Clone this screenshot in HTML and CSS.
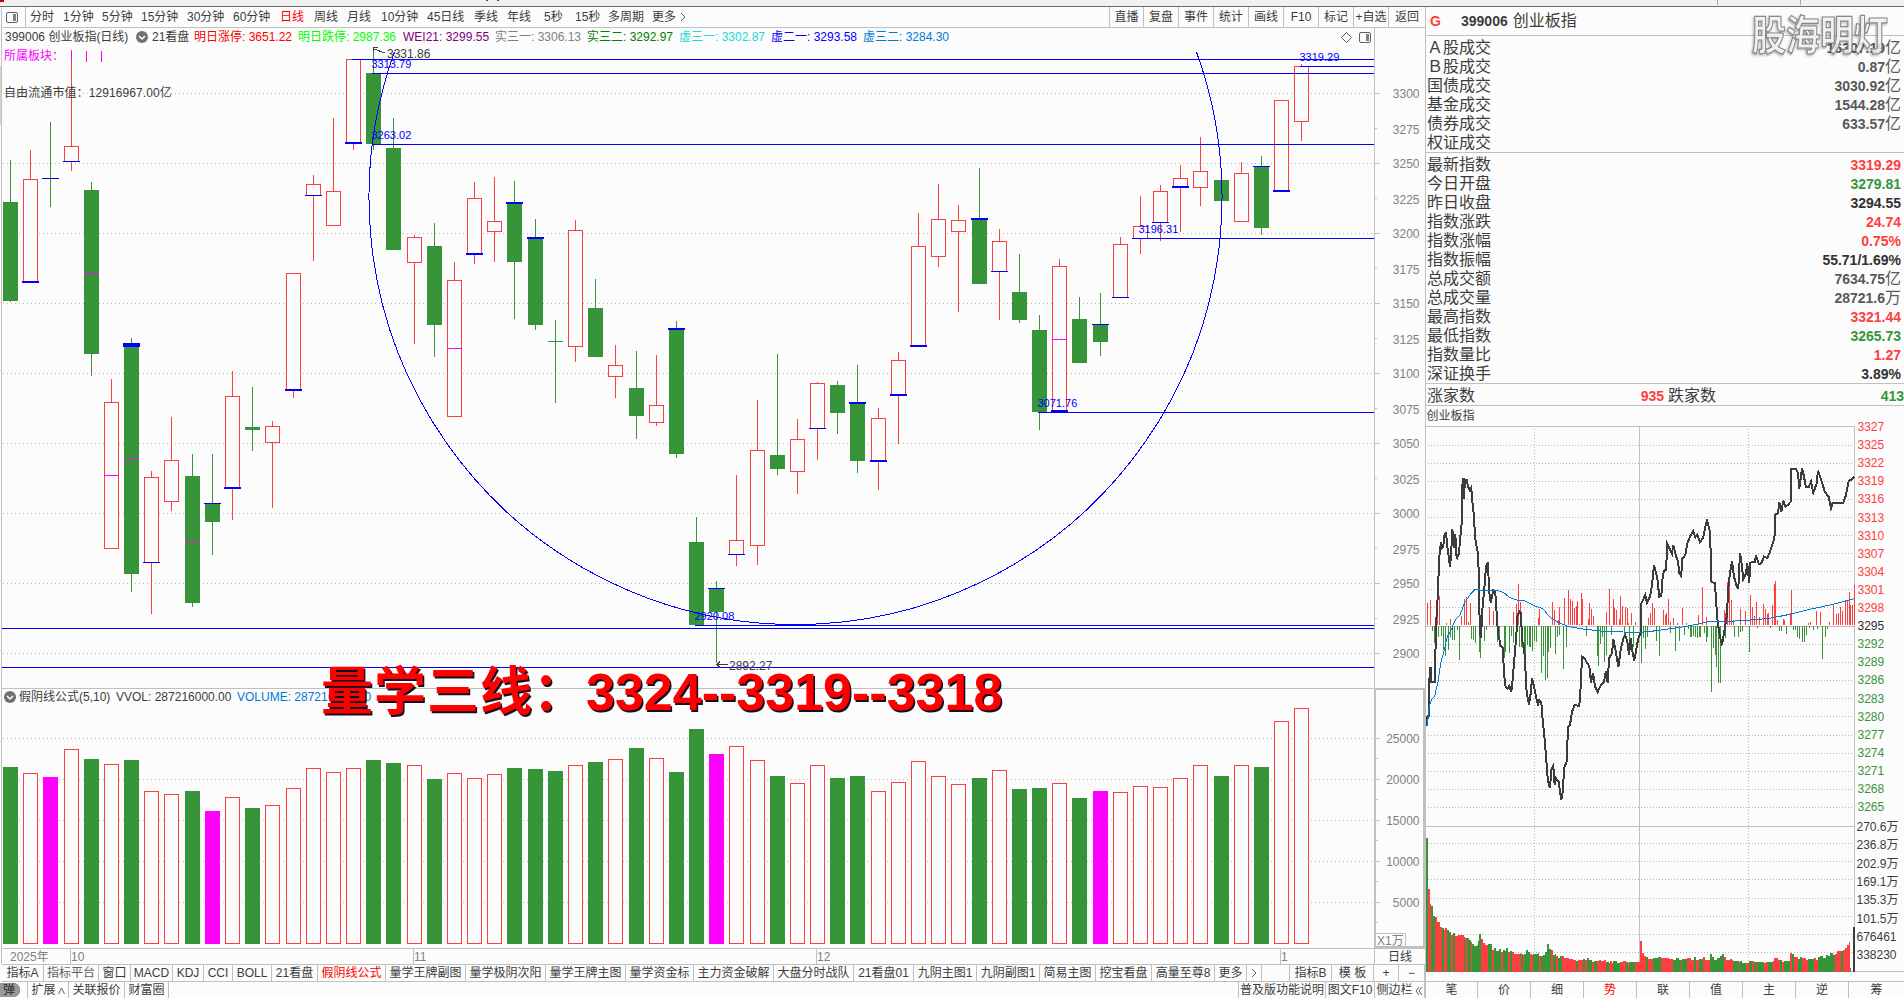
FILE: index.html
```
<!DOCTYPE html>
<html lang="zh-CN">
<head>
    <meta charset="UTF-8">
    <meta name="viewport" content="width=device-width, initial-scale=1.0">
    <title>创业板指 399006</title>
    <link rel="stylesheet" href="styles.css">
</head>
<body>
    <div class="top-strip"></div>
    <div class="main">
        <div class="left">
            <div class="toolbar">
                <div class="periods">
                    <span class="panel-toggle"><svg width="12" height="11"><rect x="0.5" y="0.5" width="11" height="10" rx="1.5"/><rect class="fill" x="7" y="2" width="3" height="7"/></svg></span>
                    <span>分时</span><span>1分钟</span><span>5分钟</span><span>15分钟</span><span>30分钟</span><span>60分钟</span>
                    <span class="active">日线</span><span>周线</span><span>月线</span><span>10分钟</span><span>45日线</span>
                    <span>季线</span><span>年线</span><span>5秒</span><span>15秒</span><span>多周期</span><span>更多<svg width="6" height="10"><path d="M1 1L5 5L1 9"/></svg></span>
                </div>
                <div class="actions">
                    <span>直播</span><span>复盘</span><span>事件</span><span>统计</span><span>画线</span><span>F10</span><span>标记</span><span>+自选</span><span>返回</span>
                </div>
            </div>
            <div class="chart">
                <svg id="kline" width="1423" height="920" viewBox="2 28 1423 920"></svg>
                <div class="legend legend-main">
                    <span>399006 创业板指(日线)</span>
                    <svg class="dot" width="12" height="12"><circle cx="6" cy="6" r="6"/><path d="M3 5L6 8L9 5"/></svg>
                    <span>21看盘</span>
                    <span class="c-red">明日涨停: 3651.22</span>
                    <span class="c-lime">明日跌停: 2987.36</span>
                    <span class="c-purple">WEI21: 3299.55</span>
                    <span class="c-gray">实三一: 3306.13</span>
                    <span class="c-green">实三二: 3292.97</span>
                    <span class="c-cyan">虚三一: 3302.87</span>
                    <span class="c-blue">虚二一: 3293.58</span>
                    <span class="c-sky">虚三二: 3284.30</span>
                </div>
                <div class="legend-tools">
                    <svg width="11" height="11"><path d="M5.5 0.5L10.5 5.5L5.5 10.5L0.5 5.5Z"/></svg>
                    <svg width="12" height="11"><rect x="0.5" y="0.5" width="11" height="10" rx="1.5"/><rect class="fill" x="7" y="2" width="3" height="7"/></svg>
                </div>
                <div class="sector">所属板块：<i></i><i></i><i></i></div>
                <div class="market-cap">自由流通市值：12916967.00亿</div>
                <div class="legend legend-vol">
                    <svg class="dot" width="12" height="12"><circle cx="6" cy="6" r="6"/><path d="M3 5L6 8L9 5"/></svg>
                    <span>假阴线公式(5,10)</span>
                    <span>VVOL: 287216000.00</span>
                    <span class="c-sky">VOLUME: 287216000.00</span>
                </div>
                <div class="headline"><span>量学三线：</span>3324--3319--3318</div>
            </div>
            <div class="dates">
                <span class="year">2025年</span><span>10</span><span>11</span><span>12</span><span>1</span><span class="cycle">日线</span>
            </div>
            <div class="indicators">
                <span>指标A</span><span class="dim">指标平台</span><span>窗口</span><span>MACD</span><span>KDJ</span><span>CCI</span><span>BOLL</span><span>21看盘</span><span class="active">假阴线公式</span><span>量学王牌副图</span><span>量学极阴次阳</span><span>量学王牌主图</span><span>量学资金标</span><span>主力资金破解</span><span>大盘分时战队</span><span>21看盘01</span><span>九阴主图1</span><span>九阴副图1</span><span>简易主图</span><span>挖宝看盘</span><span>高量至尊8</span><span>更多</span><span><svg width="6" height="10"><path d="M1 1L5 5L1 9"/></svg></span><span></span><span>指标B</span><span>模 板</span><span>+</span><span>−</span>
            </div>
            <div class="footer">
                <span class="pill">弹</span><span>扩展<svg width="7" height="8"><path d="M0.5 7L3.5 1L6.5 7"/></svg></span><span>关联报价</span><span>财富圈</span><span></span><span>普及版功能说明</span><span>图文F10</span><span>侧边栏<svg width="8" height="10"><path d="M4 1L1 5L4 9M7 1L4 5L7 9"/></svg></span>
            </div>
        </div>
        <div class="right">
            <div class="stock"><b class="flag">G</b><b>399006</b><span>创业板指</span></div>
            <ul class="quotes turnover">
                <li><span>Ａ股成交</span><b>16307.19<i>亿</i></b></li>
                <li><span>Ｂ股成交</span><b>0.87<i>亿</i></b></li>
                <li><span>国债成交</span><b>3030.92<i>亿</i></b></li>
                <li><span>基金成交</span><b>1544.28<i>亿</i></b></li>
                <li><span>债券成交</span><b>633.57<i>亿</i></b></li>
                <li><span>权证成交</span></li>
            </ul>
            <ul class="quotes index">
                <li><span>最新指数</span><b class="up">3319.29</b></li>
                <li><span>今日开盘</span><b class="down">3279.81</b></li>
                <li><span>昨日收盘</span><b class="flat">3294.55</b></li>
                <li><span>指数涨跌</span><b class="up">24.74</b></li>
                <li><span>指数涨幅</span><b class="up">0.75%</b></li>
                <li><span>指数振幅</span><b class="flat">55.71/1.69%</b></li>
                <li><span>总成交额</span><b>7634.75<i>亿</i></b></li>
                <li><span>总成交量</span><b>28721.6<i>万</i></b></li>
                <li><span>最高指数</span><b class="up">3321.44</b></li>
                <li><span>最低指数</span><b class="down">3265.73</b></li>
                <li><span>指数量比</span><b class="up">1.27</b></li>
                <li><span>深证换手</span><b class="flat">3.89%</b></li>
            </ul>
            <div class="breadth"><span>涨家数</span><b class="up">935</b><span>跌家数</span><b class="down">413</b></div>
            <svg id="intraday" width="478" height="575" viewBox="1426 406 478 575"></svg>
            <div class="side-tabs">
                <span>笔</span><span>价</span><span>细</span><span class="active">势</span><span>联</span><span>值</span><span>主</span><span>逆</span><span>筹</span>
            </div>
            <div class="watermark">股海明灯</div>
        </div>
    </div>
    <script src="chart.js"></script>
</body>
</html>
```

FILE: styles.css
```
:root{
    --bg: #fcfcfc;
    --line: #c0c0c0;
    --text: #3c3c3c;
    --up: #fc4040;
    --down: #389438;
}

*{
    box-sizing: border-box;
    margin: 0;
    padding: 0;
}

body{
    width: 1904px;
    height: 998px;
    overflow: hidden;
    background-color: var(--bg);
    color: var(--text);
    font-family: 'Liberation Sans', 'Noto Sans CJK SC', sans-serif;
    font-size: 12px;
    line-height: 16px;
    white-space: nowrap;
}

svg{
    display: block;
    fill: none;
}

.top-strip{
    height: 7px;
    border-bottom: 1px solid #6c6c6c;
    background:
        linear-gradient(#a8a8a8, #a8a8a8) 1717px 0 / 1px 5px no-repeat,
        linear-gradient(#a8a8a8, #a8a8a8) 1800px 0 / 1px 5px no-repeat,
        linear-gradient(#c00000, #c00000) 0 0 / 4px 2px no-repeat,
        linear-gradient(#603090, #603090) 486px 0 / 2px 1px no-repeat,
        linear-gradient(#603090, #603090) 497px 0 / 2px 1px no-repeat,
        #f0f0f0;
}

.main{
    display: flex;
    height: 991px;
    background: linear-gradient(#d4d4d4, #d4d4d4) 0 59px / 1px 59px no-repeat;
}

.left{
    width: 1425px;
    display: flex;
    flex-direction: column;
}

/* toolbar */
.toolbar{
    height: 21px;
    display: flex;
    justify-content: space-between;
    border-bottom: 1px solid var(--line);
    border-left: 1px solid var(--line);
    margin-left: 1px;
    line-height: 20px;
}

.toolbar svg, .legend-tools svg, .indicators svg, .footer svg{
    stroke: #606060;
}

.toolbar svg .fill, .legend-tools svg .fill{
    fill: #808080;
    stroke: none;
}

.periods{
    display: grid;
    grid-template-columns: 28px 33px 39px 39px 46px 46px 47px 34px 33px 34px 46px 47px 33px 37px 31px 33px 44px 60px;
}

.periods span{
    display: flex;
    align-items: center;
}

.periods span svg{
    margin-left: 4px;
}

.periods .panel-toggle{
    width: 24px;
    border-right: 1px solid var(--line);
}

.active{
    color: #fc0000;
}

.actions{
    display: grid;
    grid-template-columns: 34px repeat(7, 35px) 37px;
    text-align: center;
}

.actions span{
    border-left: 1px solid var(--line);
}

/* charts */
.chart{
    position: relative;
    height: 920px;
    padding-left: 1px;
    margin-left: 1px;
    border-left: 1px solid var(--line);
}

.chart svg#kline{
    margin-left: -1px;
}

.legend{
    position: absolute;
    display: grid;
    align-items: center;
}

.legend-main{
    left: 3px;
    top: 1px;
    grid-template-columns: 131px 16px 42px 104px 105px 92px 92px 92px 92px 92px 92px;
}

.legend-vol{
    left: 2px;
    top: 661px;
    grid-template-columns: 15px 97px 121px 140px;
}

.dot circle{
    fill: #707070;
}

.dot path{
    stroke: #fff;
    stroke-width: 1.5;
}

.legend-tools{
    position: absolute;
    left: 1339px;
    top: 4px;
    display: flex;
    gap: 7px;
}

.sector{
    position: absolute;
    left: 2px;
    top: 20px;
    display: flex;
    align-items: center;
    color: #fc00fc;
}

.sector i{
    width: 1px;
    height: 11px;
    margin-right: 14px;
    background-color: #fc00fc;
}

.sector i:first-of-type{
    margin-left: 7px;
}

.market-cap{
    position: absolute;
    left: 2px;
    top: 57px;
    letter-spacing: 0.1px;
}

.headline{
    position: absolute;
    left: 319px;
    top: 634px;
    font-size: 52px;
    font-weight: 700;
    line-height: 60px;
    color: #ff0000;
    text-shadow: 1.5px 1.5px 0 #101020;
}

.headline span{
    letter-spacing: 1px;
}

.c-red{ color: #fc0000; }
.c-lime{ color: #00fc00; }
.c-purple{ color: #800080; }
.c-gray{ color: #808080; }
.c-green{ color: #008000; }
.c-cyan{ color: #20d8d8; }
.c-blue{ color: #0000fc; }
.c-sky{ color: #0078d4; }

#kline text, #intraday text{
    font-size: 12px;
}

#kline .axis-label{
    fill: #808080;
    text-anchor: end;
}

#kline .mark-label{
    fill: #0000fc;
    font-size: 11px;
}

#kline .note{
    fill: #3c3c3c;
}

/* date axis and bottom bars */
.dates{
    height: 16px;
    margin-left: 1px;
    display: grid;
    grid-template-columns: 68px 343px 403px 464px 94px 51px;
    border-top: 1px solid var(--line);
    border-left: 1px solid var(--line);
    color: #808080;
}

.dates span + span{
    border-left: 1px solid var(--line);
}

.dates .year{
    padding-left: 8px;
}

.dates .cycle{
    color: var(--text);
    text-align: center;
}

.indicators{
    height: 18px;
    margin-left: 2px;
    display: grid;
    grid-template-columns: 42px 55px 32px 42px 31px 29px 39px 46px 68px 80px 80px 80px 68px 80px 80px 60px 63px 63px 56px 56px 63px 32px 15px 28px 42px 42px 25px 26px;
    border-top: 1px solid var(--line);
    border-bottom: 1px solid var(--line);
    text-align: center;
}

.indicators span{
    display: flex;
    align-items: center;
    justify-content: center;
    border-right: 1px solid var(--line);
}

.dim{
    color: #606060;
}

.footer{
    height: 16px;
    display: grid;
    grid-template-columns: 28px 41px 56px 44px 1070px 87px 49px 50px;
}

.footer span{
    display: flex;
    align-items: center;
    justify-content: center;
    border-right: 1px solid var(--line);
    line-height: 17px;
}

.footer span svg{
    margin-left: 2px;
}

.footer .pill{
    justify-content: flex-start;
    padding-left: 3px;
    background: linear-gradient(#989898, #989898) 0 1px / 13px 14px no-repeat, radial-gradient(circle at 13px 8px, #989898 7px, transparent 7.5px);
    font-weight: 500;
}

/* right panel */
.right{
    position: relative;
    width: 479px;
    display: flex;
    flex-direction: column;
    border-left: 1px solid var(--line);
}

.stock{
    height: 29px;
    display: flex;
    align-items: center;
    padding-bottom: 1px;
    border-bottom: 1px solid var(--line);
    font-size: 14px;
}

.stock .flag{
    width: 31px;
    margin-left: 4px;
    color: var(--up);
}

.stock span{
    margin-left: 5px;
    font-size: 16px;
}

.quotes{
    list-style: none;
    border-bottom: 1px solid var(--line);
}

.turnover{
    height: 117px;
    padding-top: 2px;
}

.index{
    height: 231px;
    padding-top: 2px;
}

.quotes li{
    display: flex;
    justify-content: space-between;
    align-items: center;
    height: 19px;
    padding: 0 3px 0 1px;
    font-size: 16px;
}

.quotes b, .breadth b{
    font-size: 14px;
    color: #585858;
}

.quotes b i{
    font-size: 16px;
    font-style: normal;
    font-weight: 400;
}

.quotes b.flat{
    color: #303030;
}

.quotes b.up, .breadth b.up{
    color: var(--up);
}

.quotes b.down, .breadth b.down{
    color: var(--down);
}

.breadth{
    height: 22px;
    display: grid;
    grid-template-columns: 160px 77px 160px 80px;
    align-items: center;
    padding: 2px 0 0 1px;
    border-bottom: 1px solid var(--line);
    font-size: 16px;
}

.breadth b{
    text-align: right;
}

.breadth span + b + span{
    padding-left: 4px;
}

#intraday{
    flex-shrink: 0;
}

.side-tabs{
    height: 17px;
    display: grid;
    grid-template-columns: 51px repeat(7, 53px) 56px;
    border-top: 1px solid var(--line);
    text-align: center;
    line-height: 17px;
}

.side-tabs span{
    height: 16px;
}

.side-tabs span + span{
    border-left: 1px solid var(--line);
}

.watermark{
    position: absolute;
    left: 326px;
    top: 5px;
    font-size: 34px;
    font-weight: 700;
    line-height: 46px;
    color: rgba(255, 255, 255, 0.8);
    -webkit-text-stroke: 1px #888;
    transform: scaleY(1.22);
    filter: drop-shadow(-1px 1px 1px rgba(0, 0, 0, 0.35));
}
```

FILE: chart.js
```
const BG = '#fcfcfc', UP = '#fc4040', DOWN = '#389438', BLUE = '#0000fc', PINK = '#fc00fc', GRID = '#c0c0c0';

// [high, body top, body bottom, low, colour, blue mark y, blue mark height, pink mark y]
const candles = [
    [160,202,301,302,'g'], [150,179,283,283,'r',281,2], [122,178,178,207,'g',178,1], [50,146,162,171,'r',161,1],
    [182,190,354,376,'g',0,0,272], [379,402,549,549,'r',0,0,475], [338,344,574,592,'g',343,4,459], [471,477,563,614,'r',562,1],
    [417,460,502,511,'r'], [454,476,603,607,'g',0,0,540], [454,503,522,555,'g',503,1], [371,396,489,520,'r',487,2],
    [387,427,430,451,'g'], [421,426,443,508,'r'], [273,273,391,398,'r',389,2], [175,184,196,261,'r',195,1],
    [118,191,226,226,'r'], [59,59,144,150,'r',142,2], [48,73,144,150,'g'], [118,148,250,250,'g'],
    [235,237,263,344,'r'], [223,246,325,357,'g'], [262,280,417,417,'r',0,0,348], [182,198,255,264,'r',253,2],
    [177,221,232,262,'r'], [181,202,262,319,'g',202,2], [219,237,325,330,'g',237,2], [320,341,342,403,'g'],
    [220,230,347,362,'r'], [279,308,357,357,'g'], [345,365,377,398,'r'], [351,388,416,439,'g'],
    [355,405,423,426,'r'], [321,328,454,458,'g',328,2], [517,542,625,625,'g'], [581,588,612,663,'g',588,1],
    [475,540,555,566,'r',554,1], [400,450,546,565,'r'], [354,455,469,475,'g'], [419,439,472,494,'r'],
    [382,383,429,460,'r',428,1], [381,385,413,434,'g'], [365,402,461,473,'g',402,2], [408,418,461,490,'r',460,2],
    [352,360,395,444,'r',394,2], [213,246,346,346,'r',345,2], [184,219,257,267,'r'], [205,220,232,312,'r'],
    [168,218,284,284,'g',218,2], [229,241,272,320,'r',271,1], [254,292,320,323,'g'], [315,330,412,430,'g'],
    [259,266,412,412,'r',410,2,339], [297,319,363,363,'g'], [293,324,342,356,'g',324,1], [237,244,298,298,'r',297,1],
    [196,226,239,254,'r'], [185,191,223,241,'r',222,1], [165,178,188,232,'r',186,2], [137,171,188,206,'r'],
    [180,180,201,217,'g'], [162,173,222,222,'r'], [156,166,228,235,'g',166,1], [100,100,192,192,'r',190,2],
    [64,66,122,141,'r']
];

const volumes = '767g 773r 777m 749r 759g 764r 760g 791r 794r 791g 811m 797r 808g 805r 788r 768r 772r 768r 760g 763g 765r 779g 773r 778r 774r 768g 769g 771g 765r 762g 759r 748g 758r 772g 729g 754m 746r 760r 776g 783r 765r 778g 776g 791r 782r 761r 776r 784r 778g 770r 789g 788g 783r 798g 791m 792r 786r 787r 778r 765r 776g 765r 767g 721r 708r'.split(' ');

const rect = (x, y, w, h, c) => `<rect x="${x}" y="${y}" width="${w}" height="${h}" fill="${c}"/>`;
const box = (x, y, w, h, c) => `<rect x="${x + 0.5}" y="${y + 0.5}" width="${w - 1}" height="${h - 1}" fill="${BG}" stroke="${c}"/>`;
const dots = (x1, x2, y, step) => `<path d="M${x1} ${y + 0.5}H${x2}" stroke="#b8b8b8" stroke-dasharray="1 ${step - 1}"/>`;
const label = (x, y, s, cls, c) => `<text x="${x}" y="${y}" class="${cls || ''}" ${c ? `fill="${c}"` : ''}>${s}</text>`;
const cx = i => Math.floor(10.55 + i * 20.1765);

function drawKline() {
    let s = '';

    // price grid and axis
    for (let p = 3300, y = 93; p >= 2900; p -= 50, y += 70) {
        s += dots(3, 1374, y, 4) + rect(1375, y, 5, 1, GRID) + label(1419.5, y + 5, p, 'axis-label');
        if (p > 2900) s += rect(1375, y + 35, 2, 1, GRID) + label(1419.5, y + 41, p - 25, 'axis-label');
    }
    for (let v = 25000, y = 738; v > 0; v -= 5000, y += 41) {
        s += dots(3, 1374, y, 4) + rect(1376, y, 4, 1, GRID) + label(1419.5, y + 5, v, 'axis-label');
        s += rect(1376, y + 20, 2, 1, GRID);
    }
    s += rect(1374, 28, 1, 920, GRID) + rect(2, 688, 1423, 1, GRID);
    s += `<rect x="1375" y="689" width="49" height="258" stroke="${GRID}" stroke-width="2"/>`;
    s += `<rect x="1375.5" y="933.5" width="30" height="14" stroke="${GRID}"/>` + label(1377, 945, 'X1万', '', '#808080');

    // candles
    candles.forEach(([hi, top, bot, lo, c, by, bh, py], i) => {
        const x = cx(i), col = c === 'g' ? DOWN : UP;
        s += rect(x, hi, 1, lo - hi, col);
        if (bot > top) s += c === 'g' ? rect(x - 7, top, 15, bot - top, col) : box(x - 7, top, 15, bot - top, col);
        if (py) s += rect(x - 7, py, 15, 1, PINK);
        if (bh) s += rect(x - 8, by, 17, bh, BLUE);
    });

    // volume bars
    volumes.forEach((v, i) => {
        const y = parseInt(v), c = v[3], x = cx(i) - 7;
        s += c === 'r' ? box(x, y, 15, 944 - y, UP) : rect(x, y, 15, 944 - y, c === 'g' ? DOWN : '#ff00ff');
    });

    // drawn levels and arc
    [[352, 59], [372, 73], [372, 144], [1132, 238], [1300, 66], [1038, 412], [695, 625], [2, 628], [2, 667]].forEach(([x, y]) => {
        s += rect(x, y, 1374 - x, 1, BLUE);
    });
    s += `<path d="M394.5 52A426.5 427.1 0 1 0 1196.5 52" stroke="${BLUE}"/>`;
    s += label(371.5, 68, '3313.79', 'mark-label') + label(371.5, 139, '3263.02', 'mark-label');
    s += label(1299.5, 61, '3319.29', 'mark-label') + label(1138.5, 233, '3196.31', 'mark-label');
    s += label(1037.5, 407, '3071.76', 'mark-label') + label(694.5, 620, '2920.08', 'mark-label');

    s += '<path d="M385 53L374 49M378 47H373.5V52" stroke="#3c3c3c"/>' + label(387, 58, '3331.86', 'note');
    s += '<path d="M728 664.5H717M720 661.5L717 664.5L720 667.5" stroke="#3c3c3c"/>' + label(729, 670, '2892.27', 'note');

    document.getElementById('kline').innerHTML = `<g shape-rendering="crispEdges">${s}</g>`;
}

// intraday series are in thirds of a pixel, origin at 1410,400
const price = '50,978 50,950 57,948 57,870 60,803 64,803 64,847 74,847 74,800 77,735 80,632 84,580 87,480 90,450 93,427 96,445 100,440 103,408 108,396 112,440 116,470 120,500 124,460 126,387 130,400 132,443 136,402 140,478 147,460 150,420 155,370 156,300 158,234 163,296 164,238 170,240 174,260 180,272 184,264 188,315 192,350 195,410 200,440 204,460 207,540 209,680 212,715 214,700 216,640 220,600 224,550 228,500 234,486 237,570 242,608 246,590 250,570 256,578 260,640 264,700 272,738 278,742 281,800 285,855 292,866 298,858 304,875 307,850 312,790 316,745 320,690 322,650 328,634 333,640 336,720 342,740 346,800 350,880 357,914 362,880 366,834 372,860 378,890 384,916 388,900 394,905 398,960 404,1020 409,1080 414,1145 420,1164 424,1110 430,1098 434,1155 438,1135 446,1145 450,1175 454,1200 459,1170 462,1105 470,1085 474,980 480,975 486,935 494,915 508,918 512,860 516,770 524,775 530,788 538,798 543,848 549,818 555,860 563,876 570,860 582,845 588,812 593,850 597,775 606,760 610,717 616,745 625,802 632,750 640,715 646,706 652,725 657,765 662,715 668,760 673,782 680,740 686,710 692,700 692,615 700,598 706,585 711,608 720,590 726,555 732,495 738,520 742,535 748,590 754,588 758,530 762,512 768,510 772,432 780,448 786,462 790,435 797,465 804,485 808,520 814,528 816,478 826,465 832,430 840,410 849,393 856,412 862,405 870,426 880,412 886,380 891,362 896,380 900,395 902,460 904,545 915,550 918,600 922,655 928,700 936,736 942,700 950,650 956,550 960,520 966,483 972,530 980,560 985,564 990,458 996,500 1000,538 1008,520 1012,490 1018,550 1020,488 1034,486 1038,465 1046,492 1054,490 1062,470 1072,474 1080,455 1090,425 1094,405 1094,345 1104,340 1108,305 1114,336 1120,302 1126,320 1134,315 1142,305 1143,206 1158,207 1164,220 1168,266 1172,235 1176,204 1182,230 1188,262 1196,262 1203,245 1210,278 1220,250 1224,212 1234,240 1244,275 1256,290 1263,324 1268,308 1300,308 1308,285 1316,242 1326,238 1332,230';
const average = '52,978 58,920 64,900 74,888 84,845 92,790 104,745 112,710 124,688 136,660 150,645 164,608 180,584 196,567 212,571 260,571 280,577 300,593 322,600 344,602 370,616 400,627 418,650 440,665 476,680 520,687 580,694 640,696 690,697 740,692 790,685 840,677 894,665 960,664 1020,660 1080,655 1140,643 1200,628 1270,613 1332,596';
const buyBars = '52:608 61:600 78:608 82:600 88:588 109:668 121:657 154:648 163:597 169:592 175:665 181:610 208:640 238:622 250:632 310:636 319:612 325:552 331:605 385:655 388:628 427:605 433:630 445:660 448:620 463:594 475:570 481:598 487:602 493:625 499:618 502:604 508:672 514:579 518:597 535:657 538:609 544:627 550:648 589:636 598:567 610:597 613:625 619:630 628:658 631:589 637:618 645:622 652:625 655:670 664:640 676:665 714:655 720:640 726:608 732:625 760:630 766:645 769:640 775:598 781:665 790:655 802:668 817:624 829:670 859:672 865:645 877:561 889:650 943:630 947:640 952:546 958:555 965:600 970:660 990:628 1006:634 1020:585 1027:622 1033:648 1039:606 1048:650 1060:612 1066:628 1072:642 1075:640 1087:615 1093:552 1096:543 1102:660 1120:657 1123:660 1141:640 1144:570 1195:670 1202:665 1219:633 1230:635 1258:665 1270:612 1279:642 1285:640 1291:620 1297:632 1306:600 1312:603 1318:576 1322:615 1327:615 1333:555';
const sellBars = '67:693 73:728 85:712 94:708 101:750 106:768 115:750 121:710 127:720 133:720 142:690 148:780 184:718 190:720 196:728 208:755 211:773 223:722 229:690 262:726 268:740 283:774 286:755 298:758 304:708 310:730 328:740 334:742 337:745 343:750 346:780 352:735 358:740 361:740 367:752 373:722 379:726 394:820 400:768 406:840 412:833 415:755 421:745 436:762 442:712 448:704 460:806 469:740 529:707 562:768 565:797 571:733 577:712 583:786 589:765 604:706 644:712 658:765 670:740 694:789 700:713 706:747 712:712 740:722 748:768 781:700 796:752 808:722 823:704 835:688 841:712 844:712 850:708 856:712 862:714 868:712 871:712 883:698 889:727 892:712 904:875 910:745 916:765 919:802 925:850 931:849 946:715 973:712 985:710 991:695 997:692 1018:755 1042:684 1081:684 1108:693 1114:693 1129:703 1150:690 1156:690 1162:710 1168:716 1177:725 1183:725 1189:706 1198:685 1210:690 1222:686 1237:776 1246:712 1252:686';

// minute volume, x:top+colour, each step holds until the next x
const minuteVol = '1426:838g 1428:889r 1430:904r 1431:906g 1433:916g 1435:917r 1437:922r 1440:927r 1442:928g 1444:930r 1445:928r 1447:930g 1449:932g 1451:935r 1453:933g 1455:936r 1458:935r 1464:937g 1465:938r 1467:938g 1469:940g 1471:942r 1472:944g 1474:946g 1477:945g 1478:941g 1479:934g 1481:939r 1483:943r 1485:945r 1488:944g 1492:950r 1494:948g 1496:951g 1499:949g 1501:952r 1503:950g 1505:951g 1506:948g 1508:952r 1510:951g 1512:952r 1514:954r 1520:953r 1521:954g 1523:955r 1524:954g 1526:950g 1528:952g 1530:954r 1532:955r 1533:954g 1538:953g 1539:956r 1541:956g 1543:955g 1545:952g 1547:944g 1549:949g 1551:950r 1553:955g 1555:954g 1556:956r 1558:958g 1560:956g 1562:956r 1564:958r 1569:959r 1573:960r 1576:961g 1578:960r 1583:959g 1585:960r 1587:958g 1589:960g 1592:962r 1594:961g 1597:961r 1599:960r 1601:961r 1604:960r 1606:962g 1609:963r 1610:961r 1612:963r 1613:961g 1617:963g 1620:962r 1623:961r 1626:962g 1628:963r 1629:962g 1635:962r 1640:941r 1642:953r 1644:956r 1646:957g 1648:959r 1653:958g 1658:957g 1661:958r 1669:959r 1673:960g 1676:958g 1679:960g 1681:960r 1682:959g 1687:958r 1691:960r 1694:957g 1696:960r 1699:959g 1703:957r 1705:960r 1710:954g 1712:957g 1714:960g 1717:958g 1720:956g 1722:954g 1724:957r 1726:960r 1730:959r 1732:960r 1733:961g 1739:962r 1740:961g 1742:963g 1746:963r 1749:961g 1752:961r 1754:962g 1757:962r 1758:962g 1764:963r 1766:962r 1768:962g 1773:961r 1774:958r 1778:960r 1780:960g 1782:962r 1784:961g 1790:953r 1792:954g 1794:957r 1798:959g 1800:957g 1802:958r 1806:960r 1808:959g 1814:958r 1816:960r 1818:957g 1820:956g 1823:958g 1826:955g 1828:956g 1830:953g 1833:955g 1835:954r 1837:951r 1841:951g 1843:950r 1845:948r 1847:945r 1849:942r 1850:968g 1851:972g'.split(' ');

const points = str => str.split(' ').map(p => {
    const [x, y] = p.split(',');
    return (1410 + x / 3).toFixed(1) + ',' + (400 + y / 3).toFixed(1);
}).join(' ');

function drawIntraday() {
    let s = '';

    s += rect(1426, 426, 429, 1, GRID) + rect(1854, 426, 1, 546, GRID);
    s += rect(1426, 626, 429, 1, GRID) + rect(1426, 826, 429, 1, GRID) + rect(1639, 426, 1, 546, GRID);
    s += rect(1426, 971, 478, 1, GRID);
    [445,463,481,499,517,535,553,571,589,607,644,662,680,698,716,735,753,771,789,807,843,861,879,898,916,934,952].forEach(y => {
        s += dots(1428, 1854, y, 3);
    });
    [1534, 1748].forEach(x => {
        s += `<path d="M${x + 0.5} 429V972" stroke="#b8b8b8" stroke-dasharray="1 2"/>`;
    });

    [3327,3325,3322,3319,3316,3313,3310,3307,3304,3301,3298,3295,3292,3289,3286,3283,3280,3277,3274,3271,3268,3265].forEach((p, i) => {
        s += label(1857.5, Math.round(431 + i * 18.1), p, '', p > 3295 ? UP : p < 3295 ? DOWN : '#303030');
    });
    ['270.6万','236.8万','202.9万','169.1万','135.3万','101.5万','676461','338230'].forEach((v, i) => {
        s += label(1856.5, Math.round(831 + i * 18.3), v, '', '#3c3c3c');
    });

    buyBars.split(' ').forEach(b => {
        const [x, y] = b.split(':'), top = Math.round(400 + y / 3);
        s += rect(Math.floor(1410 + x / 3), top, 1, 625 - top, UP);
    });
    sellBars.split(' ').forEach(b => {
        const [x, y] = b.split(':');
        s += rect(Math.floor(1410 + x / 3), 626, 1, Math.round(y / 3 - 226), DOWN);
    });
    for (let i = 0; i < minuteVol.length - 1; i++) {
        const x = parseInt(minuteVol[i]), y = parseInt(minuteVol[i].slice(5));
        s += rect(x, y, parseInt(minuteVol[i + 1]) - x, 972 - y, minuteVol[i].endsWith('g') ? DOWN : UP);
    }
    s += rect(1853, 927, 2, 45, '#3c3c3c');

    s += `<polyline points="${points(price)}" stroke="#3c3c3c" stroke-width="2"/>`;
    s += `<polyline points="${points(average)}" stroke="#0078d4"/>`;
    s += label(1426.5, 420, '创业板指', '', '#3c3c3c');

    document.getElementById('intraday').innerHTML = `<g shape-rendering="crispEdges">${s}</g>`;
}

drawKline();
drawIntraday();
```
